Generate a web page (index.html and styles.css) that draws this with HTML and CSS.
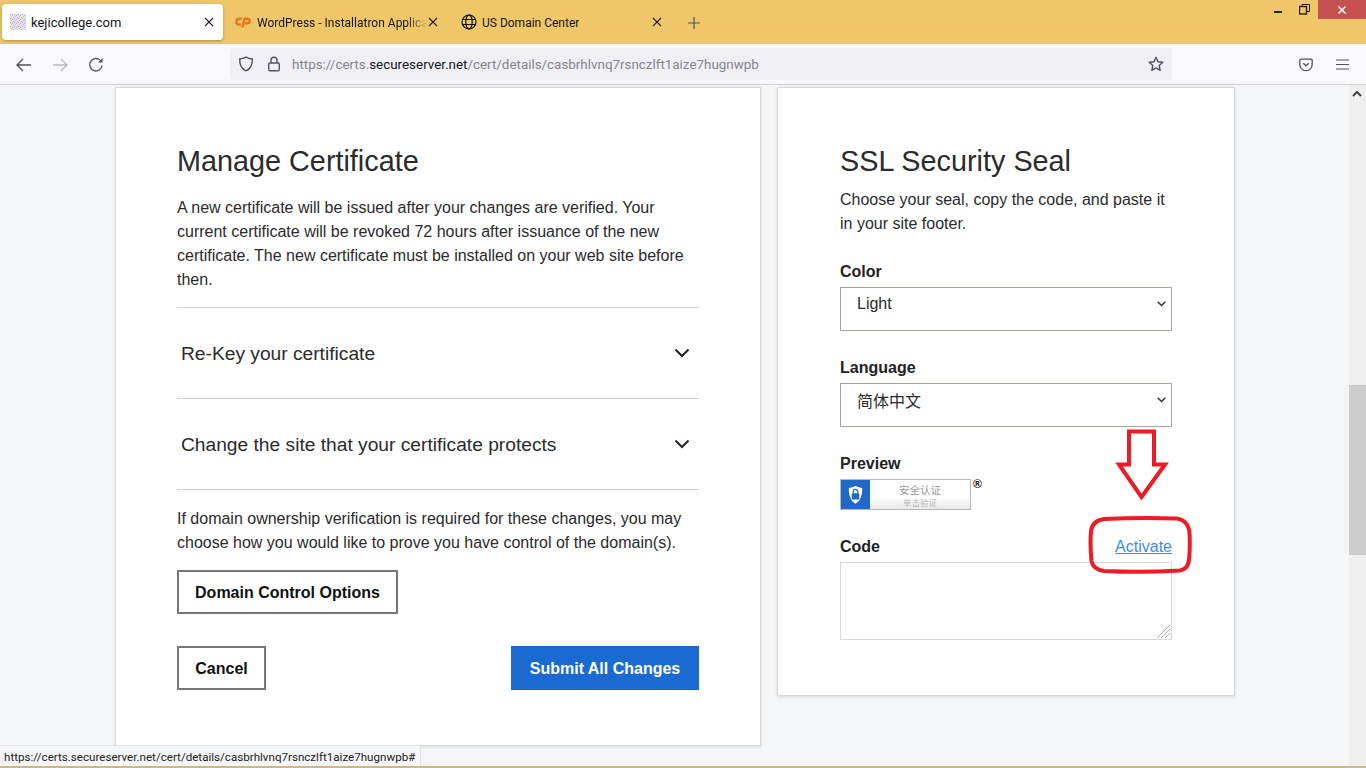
FILE: index.html
```html
<!DOCTYPE html>
<html lang="en">
<head>
<meta charset="utf-8">
<title>Manage Certificate</title>
<link rel="stylesheet" href="styles.css">
</head>
<body>
<div class="browser">
  <header class="tabbar">
    <div class="tab tab-active">
      <svg class="favicon" width="16" height="16" viewBox="0 0 16 16"><defs><pattern id="nz" width="4" height="4" patternUnits="userSpaceOnUse"><rect width="4" height="4" fill="#e8e0ea"/><rect width="1" height="1" fill="#e58bc0"/><rect x="2" y="1" width="1" height="1" fill="#8fb8e8"/><rect x="1" y="2" width="1" height="1" fill="#a9d88f"/><rect x="3" y="3" width="1" height="1" fill="#d9a0d0"/></pattern></defs><rect width="16" height="16" fill="url(#nz)"/><rect y="11" width="16" height="5" fill="url(#nz)" opacity=".6"/></svg>
      <span class="tab-title">kejicollege.com</span>
      <svg class="tab-close" width="10" height="10" viewBox="0 0 10 10"><path d="M1 1l8 8M9 1l-8 8" stroke="#222" stroke-width="1.1"/></svg>
    </div>
    <div class="tab tab-wp">
      <svg class="favicon" width="16" height="12" viewBox="0 0 16 12" fill="none" stroke="#f4701e" stroke-width="2.400"><path d="M6.800 2.800H4.300a2.900 2.900 0 0 0 0 5.800h1.500"/><path d="M7.200 11.500L9.700 2.800h2.600a2.300 2.300 0 0 1 0 4.600H9.800"/></svg>
      <span class="tab-title tab-fade">WordPress - Installatron Applica</span>
      <svg class="tab-close" width="10" height="10" viewBox="0 0 10 10"><path d="M1 1l8 8M9 1l-8 8" stroke="#222" stroke-width="1.1"/></svg>
    </div>
    <div class="tab tab-us">
      <svg class="favicon" width="16" height="16" viewBox="0 0 16 16" fill="none" stroke="#111" stroke-width="1.200"><circle cx="8" cy="8" r="7"/><ellipse cx="8" cy="8" rx="3.200" ry="7"/><path d="M1 5.500h14M1 10.500h14"/></svg>
      <span class="tab-title">US Domain Center</span>
      <svg class="tab-close" width="10" height="10" viewBox="0 0 10 10"><path d="M1 1l8 8M9 1l-8 8" stroke="#222" stroke-width="1.1"/></svg>
    </div>
    <svg class="newtab" width="12" height="12" viewBox="0 0 12 12"><path d="M6 0v12M0 6h12" stroke="#4a5468" stroke-width="1.200"/></svg>
    <div class="winctrl">
      <div class="win-btn win-min"><svg width="9" height="3" viewBox="0 0 9 3"><rect y="1" width="8" height="2" fill="#222"/></svg></div>
      <div class="win-btn"><svg width="11" height="11" viewBox="0 0 11 11" fill="none" stroke="#222" stroke-width="1"><rect x=".5" y="2.500" width="7" height="7.500" stroke-width="1.400"/><path d="M3 2.500V.5h7.500v7H8"/></svg></div>
      <div class="win-btn win-close"><svg width="10" height="10" viewBox="0 0 10 10"><path d="M1.500 1.500l7 7M8.500 1.500l-7 7" stroke="#fff" stroke-width="1.600"/></svg></div>
    </div>
  </header>
  <nav class="navbar">
    <svg class="nav-icon nav-back" width="16" height="14" viewBox="0 0 16 14" fill="none" stroke="#52525e" stroke-width="1.400"><path d="M15 7H1.500M7 1L1 7l6 6"/></svg>
    <svg class="nav-icon nav-fwd" width="16" height="14" viewBox="0 0 16 14" fill="none" stroke="#b8b8be" stroke-width="1.400"><path d="M1 7h13.500M9 1l6 6-6 6"/></svg>
    <svg class="nav-icon nav-reload" width="16" height="16" viewBox="0 0 16 16" fill="none" stroke="#52525e" stroke-width="1.400"><path d="M14 8.500A6.200 6.200 0 1 1 11.800 3"/><path d="M14.500 1v4.500H10z" fill="#52525e" stroke="none"/></svg>
    <div class="urlbar">
      <svg class="url-shield" width="16" height="16" viewBox="0 0 16 16" fill="none" stroke="#52525e" stroke-width="1.400"><path d="M8 1.200c2 1.300 4 1.700 6.300 1.800.2 5.500-1.700 9.800-6.300 11.800C3.400 12.800 1.500 8.500 1.700 3 4 2.900 6 2.500 8 1.200z"/></svg>
      <svg class="url-lock" width="14" height="16" viewBox="0 0 14 16" fill="none" stroke="#52525e" stroke-width="1.400"><rect x="1.700" y="7" width="10.600" height="7.800" rx="1.300"/><path d="M4 7V4.300a3 3 0 0 1 6 0V7"/></svg>
      <span class="url-text">https://certs.<b class="url-host">secureserver.net</b>/cert/details/casbrhlvnq7rsnczlft1aize7hugnwpb</span>
      <svg class="url-star" width="16" height="16" viewBox="0 0 16 16" fill="none" stroke="#52525e" stroke-width="1.400"><path d="M8 1.300l2 4.500 4.800.5-3.600 3.200 1 4.800L8 11.900l-4.200 2.400 1-4.800L1.200 6.300 6 5.800z" stroke-linejoin="round"/></svg>
    </div>
    <svg class="nav-icon nav-pocket" width="14" height="14" viewBox="0 0 14 14" fill="none" stroke="#52525e" stroke-width="1.300"><path d="M1.800 1.200h10.400c.6 0 1 .4 1 1v4.300a6.200 6.200 0 0 1-12.400 0V2.200c0-.6.400-1 1-1z"/><path d="M4.300 5.200L7 7.800l2.700-2.600"/></svg>
    <svg class="nav-icon nav-menu" width="13" height="11" viewBox="0 0 13 11" stroke="#52525e" stroke-width="1.200"><path d="M0 1h13M0 5.500h13M0 10h13"/></svg>
  </nav>
  <div class="viewport">
    <main class="page">
      <section class="card card-left">
        <h2 class="card-title">Manage Certificate</h2>
        <p class="intro">A new certificate will be issued after your changes are verified. Your current certificate will be revoked 72 hours after issuance of the new certificate. The new certificate must be installed on your web site before then.</p>
        <div class="accordion">
          <span>Re-Key your certificate</span>
          <svg width="16" height="10" viewBox="0 0 16 10" fill="none" stroke="#222" stroke-width="2"><path d="M1.500 1.500L8 8l6.500-6.500"/></svg>
        </div>
        <div class="accordion">
          <span>Change the site that your certificate protects</span>
          <svg width="16" height="10" viewBox="0 0 16 10" fill="none" stroke="#222" stroke-width="2"><path d="M1.500 1.500L8 8l6.500-6.500"/></svg>
        </div>
        <p class="verify">If domain ownership verification is required for these changes, you may choose how you would like to prove you have control of the domain(s).</p>
        <a class="btn btn-options">Domain Control Options</a>
        <div class="actions">
          <a class="btn btn-cancel">Cancel</a>
          <a class="btn btn-primary">Submit All Changes</a>
        </div>
      </section>
      <section class="card card-right">
        <h2 class="card-title">SSL Security Seal</h2>
        <p class="seal-intro">Choose your seal, copy the code, and paste it in your site footer.</p>
        <div class="field-label">Color</div>
        <div class="select"><span>Light</span><svg width="9" height="6" viewBox="0 0 9 6" fill="none" stroke="#333" stroke-width="1.500"><path d="M.7.700L4.500 4.500 8.300.7"/></svg></div>
        <div class="field-label">Language</div>
        <div class="select"><span class="cjk">简体中文</span><svg width="9" height="6" viewBox="0 0 9 6" fill="none" stroke="#333" stroke-width="1.500"><path d="M.7.700L4.500 4.500 8.300.7"/></svg></div>
        <div class="field-label">Preview</div>
        <div class="seal-row">
          <div class="seal">
            <div class="seal-badge"><svg width="18" height="24" viewBox="0 0 18 24"><path d="M9 1c3 1.800 5.500 2.400 8 2.600.3 9-2.500 15.500-8 19C3.500 19 .7 12.600 1 3.600 3.500 3.400 6 2.800 9 1z" fill="#fff"/><rect x="4.500" y="10" width="9" height="7.500" rx="1" fill="#2268c6"/><path d="M6.300 10V8a2.700 2.700 0 0 1 5.400 0v2" fill="none" stroke="#2268c6" stroke-width="1.400"/></svg></div>
            <div class="seal-text"><span class="seal-main cjk">安全认证</span><span class="seal-sub cjk">单击验证</span></div>
          </div>
          <span class="seal-reg">®</span>
        </div>
        <div class="code-row"><span class="code-label">Code</span><a class="activate">Activate</a></div>
        <div class="code-box">
          <svg class="grip" width="14" height="14" viewBox="0 0 14 14" stroke="#aaa" stroke-width="1"><path d="M14 1L1 14M14 5L5 14M14 9L9 14"/></svg>
        </div>
      </section>
    </main>
    <div class="scrollbar">
      <svg class="scroll-up" width="10" height="7" viewBox="0 0 10 7" fill="none" stroke="#444" stroke-width="2"><path d="M1 6l4-4 4 4"/></svg>
      <div class="scroll-thumb"></div>
    </div>
    <div class="status">https://certs.secureserver.net/cert/details/casbrhlvnq7rsnczlft1aize7hugnwpb#</div>
    <div class="taskline"></div>
    <svg class="annot annot-arrow" width="56" height="74" viewBox="0 0 56 74" fill="#fff" stroke="#ed1c24" stroke-width="4" stroke-linejoin="miter"><path d="M15 2.500h25v33h11L27.500 68 5 35.500h10z"/></svg>
    <svg class="annot annot-ring" width="104" height="60" viewBox="0 0 104 60" fill="none" stroke="#ed1c24" stroke-width="4" stroke-linejoin="round"><path d="M16 4C40 3 70 3 88 3.500 96 4 101 10 101.500 18c.4 8 .3 18-.3 25-.7 8-3 11-9 12.500-24 1.500-56 1.500-76 .5C9 55 4.500 52 3.500 46 2.500 36 2.300 24 3 16 4 8 9 5 16 4z"/></svg>
  </div>
</div>
</body>
</html>
```

FILE: styles.css
```css
* { box-sizing: border-box; }
html, body { margin: 0; padding: 0; height: 100%; overflow: hidden; }
body { font-family: "Liberation Sans", Arial, sans-serif; color: #2b2b2b; background: #f5f6f8; }
.browser { display: flex; flex-direction: column; height: 768px; width: 1366px; }

.tabbar { height: 44px; background: #efc768; display: flex; align-items: flex-start; padding: 4px 0 0 2px; flex: none; }
.tab { height: 36px; display: flex; align-items: center; font: 12px Roboto, "Noto Sans", sans-serif; color: #15141a; position: relative; }
.tab-active { width: 221px; background: #fff; border-radius: 4px; box-shadow: 0 1px 3px rgba(90,70,20,.45); padding-left: 8px; font-size: 13px; }
.tab-wp { width: 226px; padding-left: 12px; }
.tab-us { width: 225px; padding-left: 12px; }
.tab-wp .tab-title, .tab-us .tab-title { padding-top: 2px; }
.favicon { flex: none; margin-right: 5px; }
.tab-wp .favicon { margin-right: 6px; }
.tab-title { white-space: nowrap; overflow: hidden; }
.tab-fade { width: 170px; -webkit-mask-image: linear-gradient(90deg, #000 88%, transparent); mask-image: linear-gradient(90deg, #000 88%, transparent); }
.tab-close { position: absolute; right: 8px; top: 13px; }
.tab-active .tab-close { right: 9px; }
.tab-wp .tab-close { right: 11px; }
.tab-us .tab-close { right: 12px; }
.newtab { margin: 13px 0 0 14px; flex: none; }
.winctrl { margin: -4px 0 0 auto; display: flex; }
.win-btn { width: 26px; height: 19px; display: flex; align-items: center; justify-content: center; }
.win-close { background: #c75050; width: 48px; margin-left: 1px; }
.win-min { padding-top: 4px; }

.navbar { height: 41px; background: #f9f9fb; border-bottom: 1px solid #cfcfd2; display: flex; align-items: center; flex: none; position: relative; padding-bottom: 1px; }
.nav-icon { margin-top: 2px; }
.nav-back { margin-left: 16px; }
.nav-fwd { margin-left: 20px; }
.nav-reload { margin-left: 20px; }
.urlbar { margin-left: 126px; width: 942px; height: 32px; background: #f0f0f4; border-radius: 4px; display: flex; align-items: center; padding: 0 8px; }
.url-shield { margin-left: 0; }
.url-lock { margin-left: 13px; }
.url-text { font: 13.400px Roboto, "Noto Sans", sans-serif; color: #85858c; margin: 2px 0 0 11px; white-space: nowrap; }
.url-host { font-weight: 400; color: #15141a; }
.url-star { margin-left: auto; }
.nav-pocket { margin-left: 127px; }
.nav-menu { margin-left: 23px; }

.viewport { flex: 1; display: flex; position: relative; min-height: 0; background: #f5f6f8; }
.page { flex: 1; display: flex; align-items: flex-start; padding: 2px 0 0 115px; gap: 16px; }
.card { background: #fff; border: 1px solid #d9d9d9; box-shadow: 0 1px 3px rgba(0,0,0,.12); }
.card-left { width: 646px; height: 659px; padding: 53px 61px 0; }
.card-right { width: 458px; height: 609px; padding: 53px 62px 0; }
.card-title { font-size: 28.800px; font-weight: 400; line-height: 40px; margin: 0; color: #2b2b2b; }
.intro { margin: 15px 0 0; font-size: 16px; line-height: 24px; }
.accordion { height: 91px; border-top: 1px solid #d4d4d4; display: flex; align-items: center; justify-content: space-between; padding: 0 9px 0 4px; font-size: 19.200px; }
.accordion span { padding-top: 2px; }
.intro + .accordion { margin-top: 15px; }
.verify { margin: 0; border-top: 1px solid #d4d4d4; padding-top: 17px; font-size: 16px; line-height: 24px; }
.btn { display: flex; align-items: center; justify-content: center; height: 44px; padding-top: 2px; font-size: 16px; font-weight: 700; color: #111; border: 2px solid #767676; }
.btn-options { width: 221px; margin-top: 15px; }
.actions { display: flex; justify-content: space-between; margin-top: 32px; }
.btn-cancel { width: 89px; }
.btn-primary { width: 188px; background: #1b6ad1; border-color: #1b6ad1; color: #fff; }

.seal-intro { margin: 7px 0 0; font-size: 16px; line-height: 24px; }
.field-label { font-size: 16px; font-weight: 700; line-height: 24px; margin-top: 24px; color: #222; }
.select + .field-label { margin-top: 25px; }
.select { height: 44px; margin-top: 3px; border: 1px solid #aaa59b; display: flex; align-items: center; justify-content: space-between; padding: 0 5px 10px 16px; font-size: 16px; }
.cjk { font-family: "Noto Sans CJK SC", "Liberation Sans", sans-serif; }
.seal-row { display: flex; align-items: flex-start; margin-top: 3px; height: 31px; }
.seal { width: 131px; height: 31px; border: 1px solid #b8b8b8; display: flex; background: linear-gradient(#fff 60%, #e9e9e9); }
.seal-badge { width: 29px; background: #2268c6; display: flex; align-items: center; justify-content: center; flex: none; }
.seal-badge svg { width: 15px; height: 20px; }
.seal-text { flex: 1; display: flex; flex-direction: column; align-items: center; padding-top: 3px; }
.seal-main { font-size: 10.500px; color: #9a9a9a; line-height: 13px; height: 14px; }
.seal-sub { font-size: 8.500px; color: #b5b5b5; line-height: 10px; height: 10px; }
.seal-reg { font: 700 12px "Liberation Sans", sans-serif; margin: -2px 0 0 2px; color: #111; }
.code-row { display: flex; justify-content: space-between; align-items: center; height: 24px; margin-top: 25px; font-size: 16px; }
.code-label { font-weight: 700; color: #222; }
.activate { color: #3d8bf0; text-decoration: underline; }
.code-box { height: 78px; margin-top: 3px; border: 1px solid #d9d9d4; position: relative; }
.grip { position: absolute; right: 1px; bottom: 1px; }

.scrollbar { width: 17px; flex: none; background: #efefef; position: relative; }
.scroll-up { position: absolute; left: 3px; top: 5px; }
.scroll-thumb { position: absolute; left: 0; top: 300px; width: 17px; height: 170px; background: #cdcdcd; }

.status { position: absolute; left: 0; bottom: 2px; height: 21px; background: #f5f6f8; border: 1px solid #e3e3e3; border-left: 0; border-bottom: 0; padding: 0 0 0 4px; width: 421px; font: 11.600px/22px Roboto, "Noto Sans", sans-serif; color: #222; white-space: nowrap; }
.taskline { position: absolute; left: 0; right: 0; bottom: 0; height: 2px; background: #c9b888; }
.annot { position: absolute; }
.annot-arrow { left: 1114px; top: 344px; }
.annot-ring { left: 1088px; top: 430px; }
```
